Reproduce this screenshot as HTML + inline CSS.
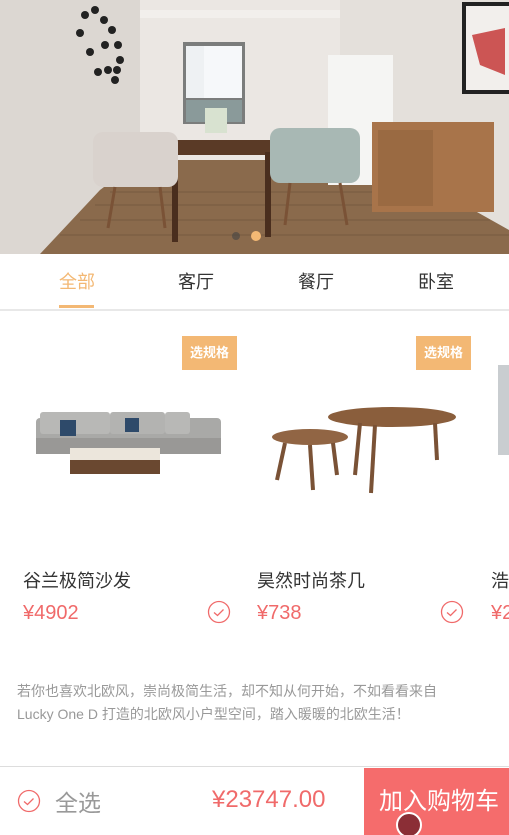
<!DOCTYPE html>
<html><head><meta charset="utf-8">
<style>
*{margin:0;padding:0;box-sizing:border-box}
body{width:509px;height:835px;overflow:hidden;background:#fff;font-family:"Liberation Sans","Noto Sans CJK SC",sans-serif;position:relative}
.abs{position:absolute}
.tab{position:absolute;top:268px;font-size:18px;color:#333;transform:translateX(-50%)}
.badge{position:absolute;top:336px;width:55px;height:34px;background:#f3b874;color:#fff;font-size:13px;font-weight:bold;text-align:center;line-height:34px}
.name{position:absolute;top:567px;font-size:18px;color:#333}
.price{position:absolute;top:602px;font-size:20px;color:#f06a6a}
</style></head><body>
<svg class="abs" style="left:0;top:0" width="509" height="254" viewBox="0 0 509 254">
<rect width="509" height="254" fill="#e6e2dd"/>
<polygon points="0,0 140,0 140,200 40,254 0,254" fill="#dcd7d2"/>
<polygon points="140,0 340,0 340,160 140,160" fill="#ebe7e3"/>
<polygon points="340,0 509,0 509,254 420,180 340,160" fill="#e4e0db"/>
<rect x="140" y="10" width="200" height="8" fill="#f2efec"/>
<polygon points="40,254 100,190 140,160 340,160 420,180 509,230 509,254" fill="#8a6a4c"/>
<g stroke="#6c5038" stroke-width="1" opacity=".6">
<line x1="60" y1="235" x2="509" y2="235"/><line x1="80" y1="220" x2="490" y2="220"/><line x1="95" y1="205" x2="470" y2="205"/><line x1="110" y1="192" x2="440" y2="192"/></g>
<rect x="183" y="42" width="62" height="82" fill="#7b7d7c"/>
<rect x="186" y="46" width="56" height="52" fill="#eef1f3"/>
<rect x="186" y="100" width="56" height="22" fill="#8a9a9a"/>
<rect x="204" y="46" width="38" height="52" fill="#f6f8fa"/>
<g fill="#222"><circle cx="85" cy="15" r="4"/><circle cx="95" cy="10" r="4"/><circle cx="104" cy="20" r="4"/><circle cx="112" cy="30" r="4"/><circle cx="80" cy="33" r="4"/><circle cx="90" cy="52" r="4"/><circle cx="105" cy="45" r="4"/><circle cx="118" cy="45" r="4"/><circle cx="120" cy="60" r="4"/><circle cx="98" cy="72" r="4"/><circle cx="108" cy="70" r="4"/><circle cx="117" cy="70" r="4"/><circle cx="115" cy="80" r="4"/></g>
<rect x="328" y="55" width="65" height="130" fill="#f5f5f3"/>
<rect x="372" y="122" width="122" height="90" fill="#a8744a"/>
<rect x="378" y="130" width="55" height="76" fill="#9a6a42"/>
<rect x="462" y="2" width="47" height="92" fill="#222"/><rect x="466" y="6" width="43" height="84" fill="#f2efec"/>
<polygon points="472,35 505,28 505,75 480,65" fill="#c63a3a" opacity=".85"/>
<polygon points="162,140 285,140 280,155 168,155" fill="#5a3a26"/>
<rect x="172" y="152" width="6" height="90" fill="#4a2e1e"/><rect x="265" y="152" width="6" height="85" fill="#4a2e1e"/>
<rect x="93" y="132" width="85" height="55" rx="10" fill="#d9d2cd"/>
<rect x="270" y="128" width="90" height="55" rx="10" fill="#a8b8b4"/>
<g stroke="#7a5236" stroke-width="3"><line x1="115" y1="187" x2="108" y2="228"/><line x1="160" y1="187" x2="165" y2="228"/><line x1="290" y1="183" x2="285" y2="225"/><line x1="340" y1="183" x2="347" y2="225"/></g>
<rect x="205" y="108" width="22" height="25" fill="#d8e2d0"/>
<circle cx="236" cy="236" r="4" fill="#444" opacity=".6"/><circle cx="256" cy="236" r="5" fill="#f3b874"/>
</svg>
<div class="tab" style="left:77px;color:#f3b874">全部</div>
<div class="tab" style="left:196px">客厅</div>
<div class="tab" style="left:316px">餐厅</div>
<div class="tab" style="left:436px">卧室</div>
<div class="abs" style="left:59px;top:305px;width:35px;height:3px;background:#f3b874"></div>
<div class="abs" style="left:0;top:309px;width:509px;height:2px;background:#e8e8e8"></div>
<div class="badge" style="left:182px">选规格</div>
<div class="badge" style="left:416px">选规格</div>
<svg class="abs" style="left:30px;top:400px" width="195" height="90">
<rect x="6" y="18" width="185" height="34" rx="4" fill="#a9a9a7"/>
<rect x="6" y="38" width="185" height="16" fill="#999896"/>
<rect x="10" y="12" width="70" height="22" rx="3" fill="#b8b8b6"/>
<rect x="80" y="12" width="55" height="22" rx="3" fill="#b3b3b1"/>
<rect x="135" y="12" width="25" height="22" rx="3" fill="#b8b8b6"/>
<rect x="30" y="20" width="16" height="16" fill="#2e4a6a"/><rect x="95" y="18" width="14" height="14" fill="#2e4a6a"/>
<rect x="40" y="48" width="90" height="26" fill="#ece6dc"/><rect x="40" y="60" width="90" height="14" fill="#6a4830"/>
</svg>
<svg class="abs" style="left:265px;top:405px" width="200" height="90">
<ellipse cx="127" cy="12" rx="64" ry="10" fill="#8a5e3c"/>
<ellipse cx="45" cy="32" rx="38" ry="8" fill="#916544"/>
<g stroke="#7a5236" stroke-width="4"><line x1="95" y1="18" x2="90" y2="70"/><line x1="170" y1="18" x2="172" y2="55"/><line x1="110" y1="20" x2="106" y2="88"/><line x1="20" y1="38" x2="12" y2="75"/><line x1="45" y1="40" x2="48" y2="85"/><line x1="68" y1="38" x2="72" y2="70"/></g>
</svg>
<div class="abs" style="left:498px;top:365px;width:11px;height:90px;background:#c9cdd0"></div>
<div class="name" style="left:23px">谷兰极简沙发</div>
<div class="name" style="left:257px">昊然时尚茶几</div>
<div class="name" style="left:491px">浩</div>
<div class="price" style="left:23px">¥4902</div>
<div class="price" style="left:257px">¥738</div>
<div class="price" style="left:491px">¥2</div>
<svg class="abs" style="left:207px;top:600px" width="24" height="24"><circle cx="12" cy="12" r="10.5" fill="none" stroke="#f06a6a" stroke-width="1.3"/><path d="M7 12.5l3.5 3 6-6" fill="none" stroke="#f06a6a" stroke-width="1.3"/></svg>
<svg class="abs" style="left:440px;top:600px" width="24" height="24"><circle cx="12" cy="12" r="10.5" fill="none" stroke="#f06a6a" stroke-width="1.3"/><path d="M7 12.5l3.5 3 6-6" fill="none" stroke="#f06a6a" stroke-width="1.3"/></svg>
<div class="abs" style="left:17px;top:680px;font-size:14px;line-height:23px;color:#999;width:480px">若你也喜欢北欧风，崇尚极简生活，却不知从何开始，不如看看来自<br>Lucky One D 打造的北欧风小户型空间，踏入暖暖的北欧生活！</div>
<div class="abs" style="left:0;top:766px;width:509px;height:1px;background:#ddd"></div>
<svg class="abs" style="left:17px;top:789px" width="24" height="24"><circle cx="12" cy="12" r="10.5" fill="none" stroke="#f06a6a" stroke-width="1.3"/><path d="M7 12.5l3.5 3 6-6" fill="none" stroke="#f06a6a" stroke-width="1.3"/></svg>
<div class="abs" style="left:55px;top:784px;font-size:23px;color:#999">全选</div>
<div class="abs" style="left:212px;top:786px;font-size:24px;color:#f06a6a">¥23747.00</div>
<div class="abs" style="left:364px;top:768px;width:145px;height:67px;background:#f56c6c;color:#fff;font-size:24px;line-height:67px;padding-left:15px;overflow:hidden">加入购物车<div class="abs" style="left:32px;top:44px;width:26px;height:26px;border-radius:50%;background:#8b2e36;border:2px solid #fff"></div></div>
</body></html>
